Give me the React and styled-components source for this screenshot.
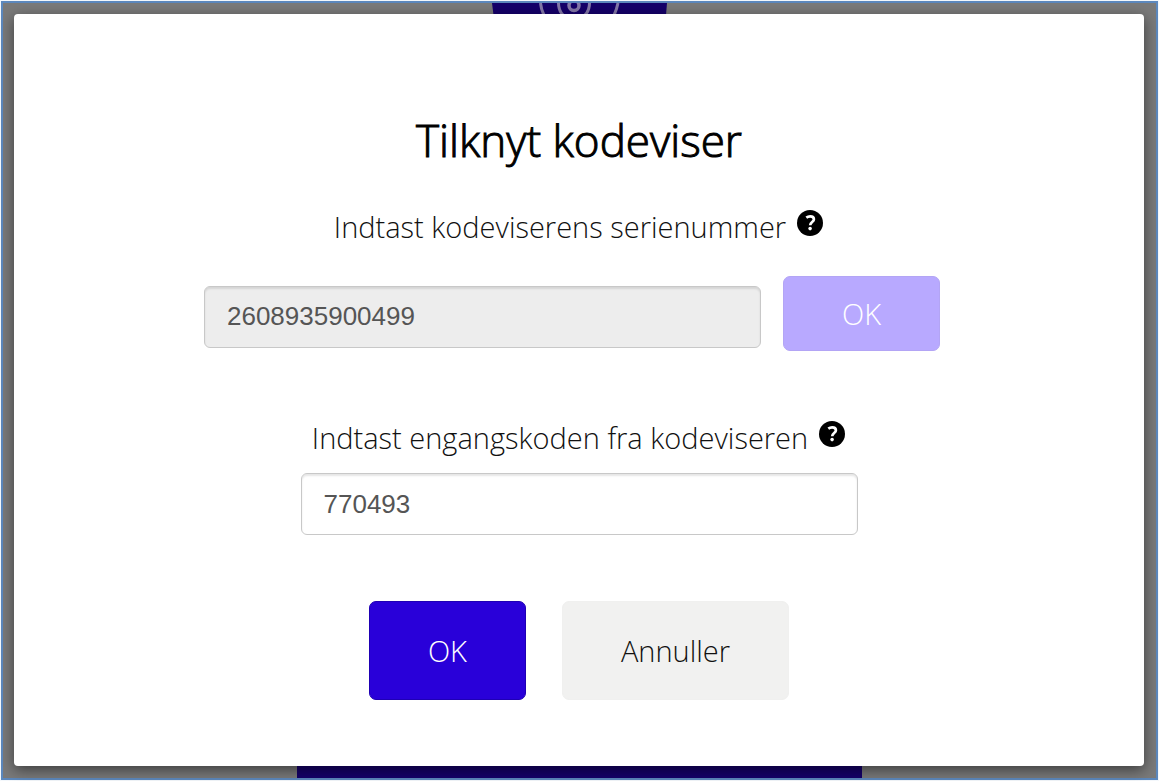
import React, { useState } from "react";
import styled, { createGlobalStyle } from "styled-components";

const GlobalStyle = createGlobalStyle`
  *, *::before, *::after { box-sizing: border-box; }
  body {
    margin: 0;
    background: #f4f8fc;
    color: #111;
    font-family: "Open Sans", "Noto Sans", sans-serif;
    font-weight: 300;
  }
`;

const Frame = styled.div`
  display: flex;
  flex-direction: column;
  min-height: calc(100vh - 2px);
  margin: 1px;
  border: 2px solid #5c88bd;
  background: #7a7a7a;
`;

const Strip = styled.div`
  display: flex;
  justify-content: center;
  height: ${(p) => p.$height}px;
  overflow: hidden;
`;

const PageBar = styled.div`
  width: 49%;
  background: #15006a;
`;

const Dialog = styled.main`
  position: relative;
  flex: 1;
  display: flex;
  flex-direction: column;
  align-items: center;
  margin: 0 12px 0 11px;
  padding: 95px 24px 60px;
  border-radius: 4px;
  background: #fff;
  box-shadow: 0 4px 14px rgba(0, 0, 0, 0.5);
`;

const Title = styled.h1`
  margin: 0 0 36px;
  color: #000;
  font-size: 44px;
  line-height: 62px;
  font-weight: 300;
  -webkit-text-stroke: 1px #000;
`;

const LabelRow = styled.div`
  display: flex;
  align-items: center;
  gap: 10px;
  margin-bottom: ${(p) => p.$gap}px;
`;

const Label = styled.label`
  font-size: 29px;
  line-height: 40px;
`;

const HelpButton = styled.button`
  display: block;
  width: 28px;
  height: 28px;
  margin-bottom: 8px;
  padding: 0;
  border: 0;
  background: none;
  cursor: pointer;

  svg { display: block; }
`;

const Field = styled.input`
  width: 557px;
  max-width: 100%;
  height: 62px;
  padding: 0 22px;
  border: 1px solid #c8c8c8;
  border-radius: 6px;
  background: #fff;
  color: #555;
  font-family: "Liberation Sans", Arial, sans-serif;
  font-size: 26px;
  box-shadow: inset 0 2px 2px rgba(0, 0, 0, 0.1);

  &:disabled { background: #ededed; }
`;

const SerialRow = styled.div`
  display: flex;
  align-items: baseline;
  gap: 22px;
  margin: 0 14px 67px 0;
`;

const Button = styled.button`
  height: ${(p) => (p.$tall ? 99 : 75)}px;
  padding: 0 58px;
  border: 1px solid ${(p) => (p.$primary ? "#1f00b4" : "#f0f0ef")};
  border-radius: 7px;
  background: ${(p) => (p.$primary ? "#2900d9" : "#f1f1f0")};
  color: ${(p) => (p.$primary ? "#fff" : "#111")};
  font: inherit;
  font-size: 29px;
  cursor: pointer;

  &:disabled {
    border-color: #b3a5f5;
    background: #b8a9ff;
    cursor: default;
  }
`;

const Actions = styled.div`
  display: flex;
  gap: 36px;
  margin-top: 66px;
`;

function Emblem() {
  return (
    <svg width="176" height="12" viewBox="0 0 176 12" aria-hidden="true">
      <path d="M0 0H175L174 12H1.500Z" fill="#15006a" />
      <g fill="none" stroke="#8478a8" strokeWidth="3">
        <path d="M48.500 0C49 5 50 8 52 12" />
        <path d="M126 0C125 5 124 8 122 12" />
        <path d="M66.500 0C66.500 5 68 9 71 12" />
        <path d="M97.500 0C97.500 5 96 9 93 12" />
        <circle cx="82" cy="2.500" r="5" strokeWidth="3.500" />
      </g>
    </svg>
  );
}

function Help({ label }) {
  return (
    <HelpButton type="button" aria-label={label}>
      <svg width="28" height="28" viewBox="0 0 28 28" aria-hidden="true">
        <circle cx="14" cy="14" r="13" fill="#000" />
        <path
          d="M10.300 8.700C11.500 7.800 12.700 7.300 14.200 7.300C16.500 7.300 17.900 8.400 17.900 10.300C17.900 13.100 14.200 13 14.200 16.300"
          fill="none"
          stroke="#fff"
          strokeWidth="2.700"
        />
        <circle cx="14.100" cy="19.600" r="1.800" fill="#fff" />
      </svg>
    </HelpButton>
  );
}

export default function App() {
  const [code, setCode] = useState("770493");

  return (
    <>
      <GlobalStyle />
      <Frame>
        <Strip $height={11}>
          <Emblem />
        </Strip>
        <Dialog>
          <Title>Tilknyt kodeviser</Title>
          <LabelRow $gap={29}>
            <Label htmlFor="serial">Indtast kodeviserens serienummer</Label>
            <Help label="Hjælp til serienummer" />
          </LabelRow>
          <SerialRow>
            <Field id="serial" value="2608935900499" disabled readOnly />
            <Button type="button" $primary disabled>OK</Button>
          </SerialRow>
          <LabelRow $gap={15}>
            <Label htmlFor="code">Indtast engangskoden fra kodeviseren</Label>
            <Help label="Hjælp til engangskode" />
          </LabelRow>
          <Field id="code" value={code} onChange={(e) => setCode(e.target.value)} />
          <Actions>
            <Button type="button" $primary $tall>OK</Button>
            <Button type="button" $tall>Annuller</Button>
          </Actions>
        </Dialog>
        <Strip $height={12}>
          <PageBar />
        </Strip>
      </Frame>
    </>
  );
}
